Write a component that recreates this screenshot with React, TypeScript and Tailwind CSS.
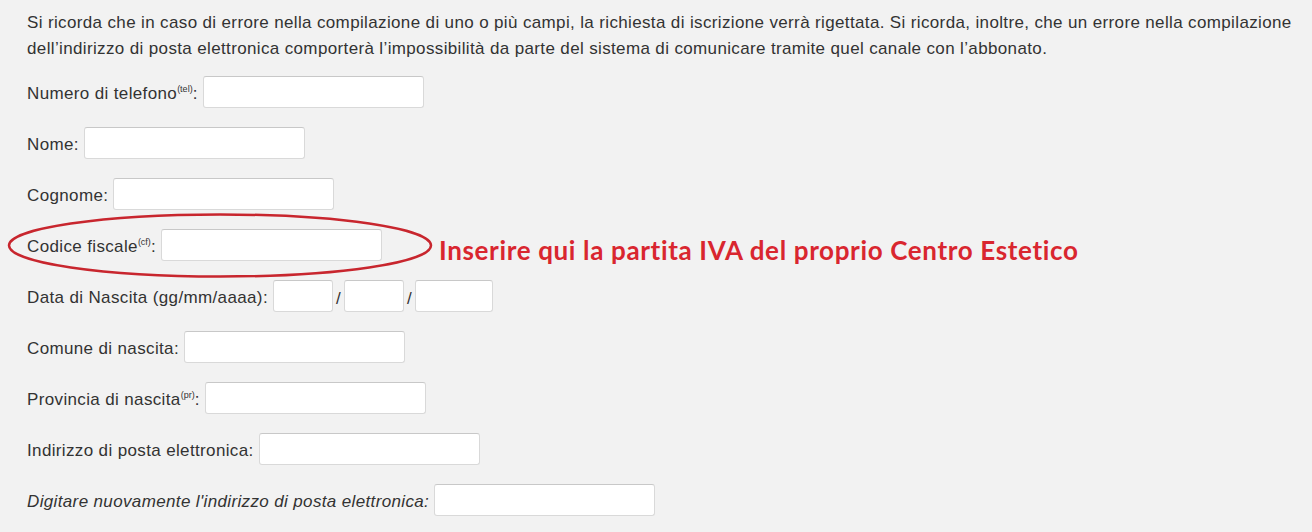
import React from 'react'

function Field({ w = 'w-[221px]' }: { w?: string }) {
  return <input type="text" className={`h-8 ${w} rounded-[3px] border border-[#d9d9d9] border-t-[#c8c8c8] bg-white`} />
}

function Sup({ children }: { children: React.ReactNode }) {
  return <sup className="relative -top-[7px] text-[9px] tracking-normal">{children}</sup>
}

function Row({ label, children }: { label: React.ReactNode; children?: React.ReactNode }) {
  return (
    <div className="flex h-8 items-center">
      <span className="mr-[5px] mt-[3px] whitespace-nowrap">{label}</span>
      {children ?? <Field />}
    </div>
  )
}

export default function App() {
  return (
    <div className="relative h-[532px] w-[1312px] overflow-hidden bg-[#f2f2f2] pl-[27px] pt-[10px] font-['Liberation_Sans',Arial,sans-serif] text-[17px] leading-[26px] tracking-[0.36px] text-[#333]">
      <p className="whitespace-nowrap">
        Si ricorda che in caso di errore nella compilazione di uno o più campi, la richiesta di iscrizione verrà rigettata. Si ricorda, inoltre, che un errore nella compilazione
        <br />
        dell’indirizzo di posta elettronica comporterà l’impossibilità da parte del sistema di comunicare tramite quel canale con l’abbonato.
      </p>

      <div className="mt-[14px] flex flex-col gap-[19px]">
        <Row label={<>Numero di telefono<Sup>(tel)</Sup>:</>} />
        <Row label="Nome:" />
        <Row label="Cognome:" />
        <div className="flex h-8 items-center">
          <span className="mr-[5px] mt-[3px] whitespace-nowrap">Codice fiscale<Sup>(cf)</Sup>:</span>
          <Field />
          <span className="ml-[57px] mt-[10px] whitespace-nowrap font-['Lato',sans-serif] text-[26px] font-bold tracking-[0.65px] text-[#d9262f]">
            Inserire qui la partita IVA del proprio Centro Estetico
          </span>
        </div>
        <Row label="Data di Nascita (gg/mm/aaaa):">
          <div className="flex items-center">
            <Field w="w-[60px]" />
            <span className="mx-[3px] mt-[5px]">/</span>
            <Field w="w-[60px]" />
            <span className="mx-[3px] mt-[5px]">/</span>
            <Field w="w-[78px]" />
          </div>
        </Row>
        <Row label="Comune di nascita:" />
        <Row label={<>Provincia di nascita<Sup>(pr)</Sup>:</>} />
        <Row label="Indirizzo di posta elettronica:" />
        <Row label={<i>Digitare nuovamente l'indirizzo di posta elettronica:</i>} />
      </div>

      <svg className="pointer-events-none absolute left-0 top-0" width="1312" height="532">
        <ellipse cx="220" cy="245.5" rx="211" ry="31" fill="none" stroke="#c8262e" strokeWidth="2.5" />
      </svg>
    </div>
  )
}
